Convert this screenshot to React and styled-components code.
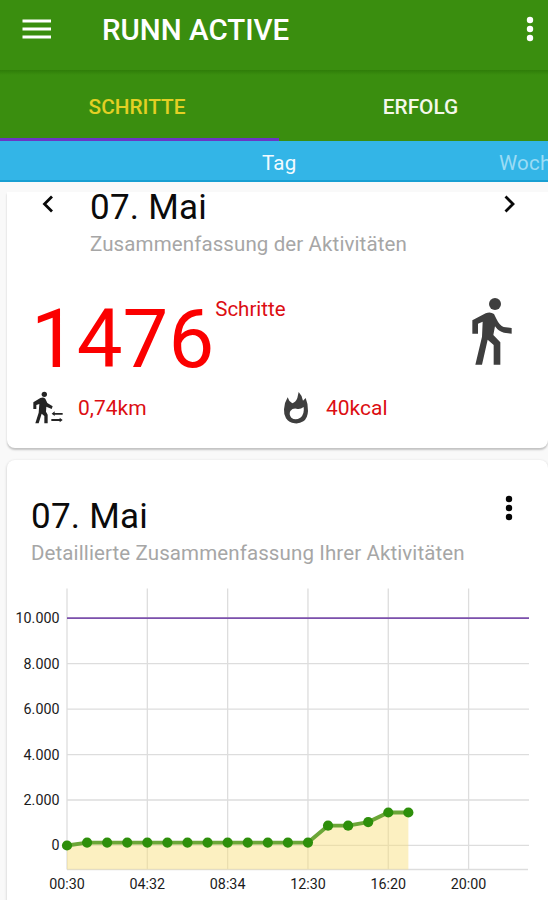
import React, { Component } from 'react';
import styled, { createGlobalStyle, ThemeProvider } from 'styled-components';

const theme = {
  green: '#3a8e0f',
  purple: '#6b36c4',
  blue: '#33b5e7',
  blueEdge: '#189fd2',
  yellow: '#e3d024',
  red: '#dc0d12',
  icon: '#3e3e3e',
  muted: '#a6a6a6',
  background: '#f9f9f9',
};

const GlobalStyle = createGlobalStyle`
  * {
    box-sizing: border-box;
  }

  body {
    margin: 0;
    overflow: hidden;
    background: ${props => props.theme.background};
    font-family: Roboto, 'Liberation Sans', sans-serif;
  }
`;

const Screen = styled.div`
  display: flex;
  flex-direction: column;
  width: 548px;
  height: 900px;
  overflow: hidden;
`;

const TopBar = styled.header`
  display: flex;
  align-items: center;
  flex: none;
  height: 70px;
  padding: 0 12px 12px 22px;
  background: ${props => props.theme.green};
  color: #fff;
`;

const Title = styled.h1`
  flex: 1;
  margin: 0 0 0 50px;
  padding-top: 2px;
  font-size: 29.5px;
  font-weight: 500;
  line-height: 32px;
`;

const Tabs = styled.nav`
  display: flex;
  flex: none;
  height: 71px;
  background: linear-gradient(#2f7d09, ${props => props.theme.green} 5px);
`;

const Tab = styled.div`
  display: flex;
  align-items: center;
  justify-content: center;
  width: ${props => (props.$active ? '279px' : '269px')};
  padding: ${props => (props.$active ? '6px 5px 0 0' : '6px 0 3px 14px')};
  border-bottom: ${props =>
    props.$active ? `3px solid ${props.theme.purple}` : 'none'};
  color: ${props => (props.$active ? props.theme.yellow : '#f4f8ea')};
  font-size: 20.8px;
  font-weight: 500;
`;

const Periods = styled.nav`
  display: flex;
  align-items: center;
  flex: none;
  height: 41px;
  padding-left: 262px;
  background: ${props => props.theme.blue};
  border-bottom: 2px solid ${props => props.theme.blueEdge};
  white-space: nowrap;
  overflow: hidden;
`;

const Period = styled.span`
  flex: none;
  width: 237px;
  padding-top: 4px;
  color: ${props => (props.$active ? '#f2fbff' : '#9bdcf5')};
  font-size: 20.5px;
  letter-spacing: 0.2px;
`;

const Content = styled.main`
  display: flex;
  flex-direction: column;
  flex: 1;
  min-height: 0;
  gap: 12px;
  padding: 10px 0 0 7px;
`;

const Card = styled.section`
  flex: none;
  height: ${props => props.$height};
  border-radius: ${props => (props.$scrolled ? '0 0 8px 8px' : '8px')};
  background: #fff;
  box-shadow: ${props =>
    props.$scrolled
      ? '0 2px 2px rgba(0, 0, 0, 0.22)'
      : '0 1px 3px rgba(0, 0, 0, 0.22)'};
`;

const CardHeader = styled.div`
  display: flex;
  align-items: flex-start;
  padding: ${props => props.$padding};
`;

const Heading = styled.div`
  flex: 1;
  margin: ${props => props.$margin || 0};
`;

const CardTitle = styled.h2`
  margin: 0;
  color: #0b0b0b;
  font-size: 35px;
  font-weight: 400;
  line-height: 40px;
  letter-spacing: 0.25px;
`;

const Subtitle = styled.p`
  margin: 4px 0 0;
  color: ${props => props.theme.muted};
  font-size: 20.5px;
  line-height: 24px;
  letter-spacing: 0.11px;
`;

const Steps = styled.div`
  display: flex;
  align-items: flex-start;
  height: 90px;
  margin-top: 38px;
  padding: 0 35px 0 24px;
`;

const StepCount = styled.span`
  color: #fb0000;
  font-size: 81.5px;
  line-height: 90px;
`;

const StepLabel = styled.span`
  flex: 1;
  margin-top: 3px;
  margin-left: 1px;
  color: ${props => props.theme.red};
  font-size: 20.5px;
  line-height: 24px;
`;

const Stats = styled.div`
  display: flex;
  margin-top: 7px;
  padding-left: 25px;
`;

const Stat = styled.div`
  display: flex;
  align-items: center;
  width: 251px;
  height: 34px;
  gap: ${props => props.$gap};
  color: ${props => props.theme.red};
  font-size: 21px;
`;

const Icon = styled.svg`
  display: block;
  flex: none;
  margin-top: ${props => props.$top || 0};
`;

const Chart = styled.svg`
  display: block;
  font-family: Roboto, 'Liberation Sans', sans-serif;
  font-size: 14.3px;
  fill: #1b1b1b;
`;

const MenuIcon = () => (
  <Icon width="30" height="22" viewBox="0 0 30 22">
    <path d="M.5 3h28.500M.5 11h28.500M.5 19h28.500" stroke="#fff" strokeWidth="3" />
  </Icon>
);

const DotsIcon = ({ color, top }) => (
  <Icon width="12" height="28" viewBox="0 0 12 28" fill={color} $top={top}>
    <circle cx="6" cy="5" r="3.200" />
    <circle cx="6" cy="14" r="3.200" />
    <circle cx="6" cy="23" r="3.200" />
  </Icon>
);

const ArrowIcon = ({ direction }) => (
  <Icon width="14" height="20" viewBox="0 0 14 20" $top="2px">
    <path
      d={direction === 'left' ? 'M12 2.500L4.500 10l7.500 7.500' : 'M3.500 2.500L11 10l-7.500 7.500'}
      fill="none"
      stroke="#080808"
      strokeWidth="2.800"
    />
  </Icon>
);

const WalkIcon = () => (
  <Icon width="42" height="68" viewBox="0 0 126 204" fill={theme.icon} $top="3px">
    <circle cx="72" cy="21" r="18" />
    <path d="M4 70L44 49Q58 43 69 51L76 65Q86 86 98 90L122 93V110L99 107Q83 104 72 88L67 114L88 136V203H68V144L50 128L33 203H13L33 119L35 74L21 80V110H4Z" />
  </Icon>
);

const DistanceIcon = () => (
  <Icon width="32" height="34" viewBox="0 0 96 102" fill="#242424">
    <circle cx="37" cy="10" r="8" />
    <path d="M4 34L25 21Q34 17 40 23L46 36L62 46L59 54L43 47L42 62L47 71V97H37V75L29 68L20 97H10L20 65L22 39L13 42V54H4Z" />
    <path d="M59 68L68 61V66H92V71H68V75ZM92 87L83 80V84H58V90H83V94Z" />
  </Icon>
);

const FlameIcon = () => (
  <Icon width="26" height="34" viewBox="0 0 78 102" fill={theme.icon}>
    <path
      fillRule="evenodd"
      d="M14 19Q17 31 28 37Q38 34 43 21L47 3Q57 13 60 29L68 21Q75 37 75 60Q74 82 61 91Q49 99 35 97Q18 95 9 82Q2 71 3 55Q3 37 14 19ZM62 48Q53 55 44 54Q30 50 22 60Q17 71 25 80Q37 90 52 80Q65 70 62 48Z"
    />
  </Icon>
);

const days = ['00:30', '04:32', '08:34', '12:30', '16:20', '20:00'];
const levels = ['10.000', '8.000', '6.000', '4.000', '2.000', '0'];
const values = [
  0, 130, 130, 130, 130, 130, 130, 130, 130, 130, 130, 130, 130, 870, 870,
  1030, 1450, 1450,
];

const left = 60;
const top = 10.5;
const bottom = 291.5;
const zero = 267.5;
const toX = i => left + i * 20.08;
const toY = value => zero - value * 0.02275;

class StepsChart extends Component {
  render() {
    const points = values.map((value, i) => `${toX(i)},${toY(value)}`);
    const area = [
      `${left},${bottom}`,
      ...points,
      `${toX(values.length - 1)},${bottom}`,
    ];

    return (
      <Chart width="541" height="322" viewBox="0 0 541 322">
        <g stroke="#ddd" strokeWidth="1.300">
          {days.map((day, i) => (
            <line key={day} x1={toX(i * 4)} x2={toX(i * 4)} y1={top} y2={bottom} />
          ))}
          {levels.map((level, i) => (
            <line key={level} x1={left} x2="522" y1={40.2 + i * 45.45} y2={40.2 + i * 45.45} />
          ))}
          <line x1={left} x2="521" y1={bottom} y2={bottom} />
        </g>
        <line x1={left} x2="522" y1="40.200" y2="40.200" stroke="#7c50ad" strokeWidth="1.800" />
        <polygon points={area.join(' ')} fill="#f9df7d" fillOpacity="0.48" />
        <polyline points={points.join(' ')} fill="none" stroke="#6ba637" strokeWidth="3.800" />
        {values.map((value, i) => (
          <circle key={toX(i)} cx={toX(i)} cy={toY(value)} r="5.100" fill="#2e8f0b" />
        ))}
        {levels.map((level, i) => (
          <text key={level} x="52.500" y={45.2 + i * 45.45} textAnchor="end">
            {level}
          </text>
        ))}
        {days.map((day, i) => (
          <text key={day} x={toX(i * 4)} y="311" textAnchor="middle">
            {day}
          </text>
        ))}
      </Chart>
    );
  }
}

const App = () => (
  <ThemeProvider theme={theme}>
    <GlobalStyle />
    <Screen>
      <TopBar>
        <MenuIcon />
        <Title>RUNN ACTIVE</Title>
        <DotsIcon color="#fff" />
      </TopBar>
      <Tabs>
        <Tab $active>SCHRITTE</Tab>
        <Tab>ERFOLG</Tab>
      </Tabs>
      <Periods>
        <Period $active>Tag</Period>
        <Period>Woche</Period>
      </Periods>
      <Content>
        <Card $height="256px" $scrolled>
          <CardHeader $padding="0 32px 0 33px">
            <ArrowIcon direction="left" />
            <Heading $margin="-4px 0 0 36px">
              <CardTitle>07. Mai</CardTitle>
              <Subtitle>Zusammenfassung der Aktivitäten</Subtitle>
            </Heading>
            <ArrowIcon direction="right" />
          </CardHeader>
          <Steps>
            <StepCount>1476</StepCount>
            <StepLabel>Schritte</StepLabel>
            <WalkIcon />
          </Steps>
          <Stats>
            <Stat $gap="14px">
              <DistanceIcon />
              0,74km
            </Stat>
            <Stat $gap="17px">
              <FlameIcon />
              40kcal
            </Stat>
          </Stats>
        </Card>
        <Card $height="460px">
          <CardHeader $padding="37px 33px 13px 24px">
            <Heading>
              <CardTitle>07. Mai</CardTitle>
              <Subtitle>Detaillierte Zusammenfassung Ihrer Aktivitäten</Subtitle>
            </Heading>
            <DotsIcon color="#050505" top="-3px" />
          </CardHeader>
          <StepsChart />
        </Card>
      </Content>
    </Screen>
  </ThemeProvider>
);

export default App;
